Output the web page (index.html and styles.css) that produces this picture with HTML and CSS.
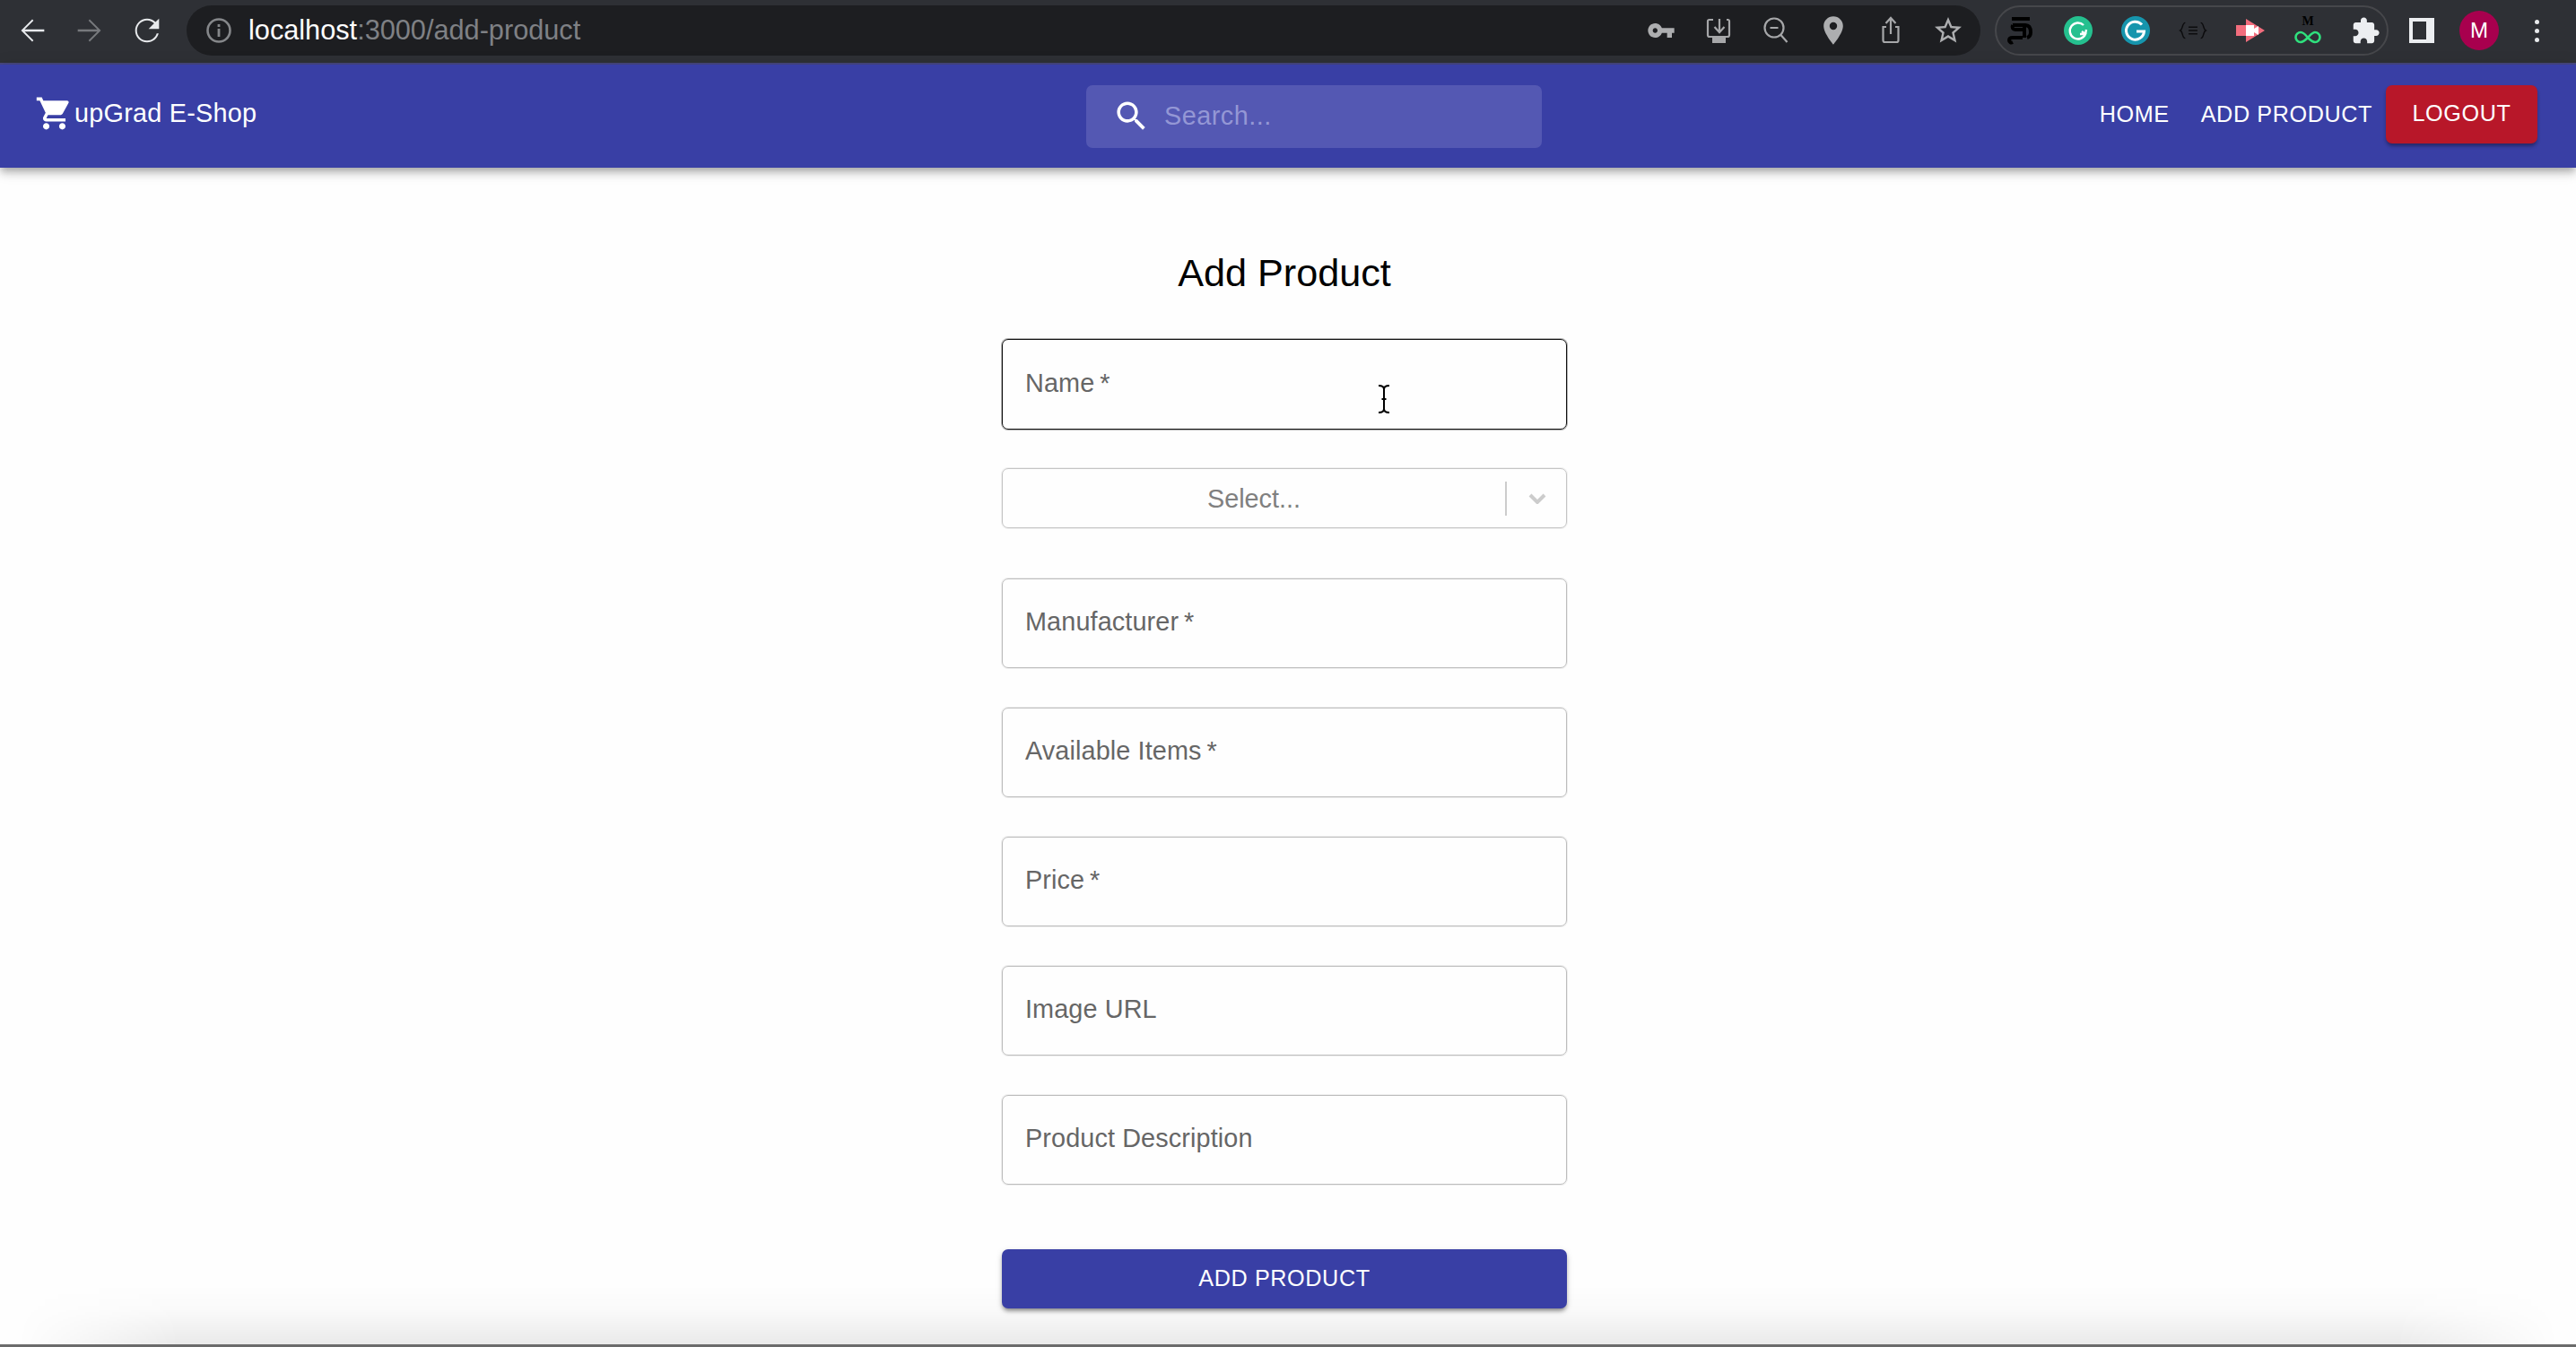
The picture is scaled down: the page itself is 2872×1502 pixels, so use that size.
FILE: index.html
```html
<!DOCTYPE html>
<html lang="en">
<head>
<meta charset="utf-8">
<title>upGrad E-Shop</title>
<link rel="stylesheet" href="styles.css">
</head>
<body>
<div class="app">
  <div class="chrome">
    <div class="slot"><svg class="ic40 light" viewBox="0 0 24 24"><path d="M20 11.3H6.9l5.9-5.9-.8-.9-7.5 7.5 7.5 7.5.8-.9-5.9-5.9H20z"/></svg></div>
    <div class="slot"><svg class="ic40 dim" viewBox="0 0 24 24"><path d="M4 11.3h13.1l-5.9-5.9.8-.9 7.5 7.5-7.5 7.5-.8-.9 5.9-5.9H4z"/></svg></div>
    <div class="slot"><svg class="ic40 light" viewBox="0 0 24 24"><path d="M17.65 6.35C16.2 4.9 14.21 4 12 4c-4.42 0-7.99 3.58-7.99 8s3.57 8 7.99 8c3.73 0 6.84-2.55 7.73-6h-1.3c-.85 2.8-3.35 4.8-6.43 4.8-3.75 0-6.8-3.05-6.8-6.8S8.25 5.2 12 5.2c1.9 0 3.5.8 4.7 2L13 11h7V4l-2.35 2.35z"/></svg></div>
    <div class="omnibox">
      <svg class="info" viewBox="0 0 28 28"><circle cx="14" cy="14" r="12.5"/><rect class="info-i" x="12.6" y="12" width="2.8" height="9"/><rect class="info-i" x="12.6" y="7" width="2.8" height="3"/></svg>
      <div class="url"><span class="url-host">localhost</span><span class="url-rest">:3000/add-product</span></div>
      <div class="omni-actions">
        <div class="slot"><svg class="ic32 grey" viewBox="0 0 24 24"><path d="M12.65 10C11.83 7.67 9.61 6 7 6c-3.31 0-6 2.69-6 6s2.69 6 6 6c2.61 0 4.83-1.67 5.65-4H17v4h4v-4h2v-4H12.65zM7 14c-1.1 0-2-.9-2-2s.9-2 2-2 2 .9 2 2-.9 2-2 2z"/></svg></div>
        <div class="slot"><svg class="ic32 line" viewBox="0 0 32 32"><path d="M10 4H5.500A1.500 1.500 0 0 0 4 5.500V21a2 2 0 0 0 2 2h20a2 2 0 0 0 2-2V5.500A1.500 1.500 0 0 0 26.500 4H25"/><path d="M17 3v14M11.500 12l5.500 6 5.500-6"/><path class="fill" d="M9 24h15v6H9z"/></svg></div>
        <div class="slot"><svg class="ic32 line" viewBox="0 0 32 32"><circle cx="14" cy="13" r="10.500"/><path d="M9.500 13h9M21.500 21l7 8"/></svg></div>
        <div class="slot"><svg class="ic36 grey" viewBox="0 0 24 24"><path d="M12 1.500C8 1.500 4.800 4.700 4.800 8.700c0 5.400 7.200 13.800 7.200 13.800s7.200-8.400 7.200-13.800C19.200 4.700 16 1.500 12 1.500zm0 10a2.800 2.800 0 0 1 0-5.600 2.800 2.800 0 0 1 0 5.600z"/></svg></div>
        <div class="slot"><svg class="ic32 line" viewBox="0 0 32 32"><path d="M11 12H7.500v15a2 2 0 0 0 2 2h13a2 2 0 0 0 2-2V12H21"/><path d="M16 20V2M10.500 8 16 2l5.500 6"/></svg></div>
        <div class="slot"><svg class="ic36 grey" viewBox="0 0 24 24"><path d="M22 9.240l-7.190-.62L12 2 9.190 8.630 2 9.240l5.460 4.730L5.820 21 12 17.270 18.180 21l-1.630-7.030L22 9.240zM12 15.400l-3.760 2.270 1-4.280-3.320-2.880 4.380-.38L12 6.100l1.710 4.040 4.380.38-3.320 2.880 1 4.280L12 15.400z"/></svg></div>
      </div>
    </div>
    <div class="ext-pill">
      <div class="slot first"><svg class="ic32" viewBox="0 0 32 32"><path class="tamil" d="M6 3h20M7 10h14c5 0 6 4 6 8 0 3-1 5-4 6M7 10c-1 3 0 5 3 5h9M20 10v14M18 24H7c-3 0-4 1-4 3s2 3 4 2"/></svg></div>
      <div class="slot"><svg class="ic32" viewBox="0 0 32 32"><circle class="g-green" cx="16" cy="16" r="16"/><path class="g-mark" d="M22 10a9 9 0 1 0 2 10h-6M24 20l-4-3M24 20l1-5"/></svg></div>
      <div class="slot"><svg class="ic32" viewBox="0 0 32 32"><circle class="g-teal" cx="16" cy="16" r="16"/><path class="g-mark thick" d="M23 9.500a10 10 0 1 0 2.500 7.500H17"/></svg></div>
      <div class="slot"><svg class="ic32" viewBox="0 0 26 16"><path class="braces" d="M6 1C3 1 4 7 1.500 8 4 9 3 15 6 15M20 1c3 0 2 6 4.500 7C22 9 23 15 20 15M9 5h8M9 8h8M9 11h8"/></svg></div>
      <div class="slot"><svg class="ic32" viewBox="0 0 32 26"><path class="rec-red" d="M11 0l21 13-21 13V19H0V7h11z"/><path class="rec-white" d="M11 7h9v12h-9zM20 11l5-3v10l-5-3z"/></svg></div>
      <div class="slot"><svg class="ic-tall" viewBox="0 0 32 36"><text class="mem-m" x="16" y="12">M</text><path class="mem-inf" d="M16 26c-3-4-5-6-8-6a5.500 5.500 0 0 0 0 11c3 0 5-2 8-5s5-6 8-6a5.500 5.500 0 0 1 0 11c-3 0-5-2-8-5z"/></svg></div>
      <div class="slot"><svg class="ic33 pale" viewBox="0 0 24 24"><path d="M20.500 11H19V7c0-1.100-.9-2-2-2h-4V3.500C13 2.120 11.880 1 10.500 1S8 2.120 8 3.500V5H4c-1.100 0-1.990.9-1.990 2v3.800H3.500c1.490 0 2.700 1.210 2.700 2.700s-1.210 2.700-2.700 2.700H2V20c0 1.100.9 2 2 2h3.800v-1.500c0-1.490 1.210-2.700 2.700-2.700 1.490 0 2.700 1.210 2.700 2.700V22H17c1.100 0 2-.9 2-2v-4h1.500c1.380 0 2.500-1.120 2.500-2.500S21.880 11 20.500 11z"/></svg></div>
    </div>
    <div class="slot side-slot"><div class="sidebar-icon"></div></div>
    <div class="slot"><div class="avatar">M</div></div>
    <div class="slot"><div class="dots"><i></i><i></i><i></i></div></div>
  </div>

  <header class="navbar">
    <div class="brand">
      <svg class="cart" viewBox="0 0 24 24"><path d="M7 18c-1.100 0-1.990.9-1.990 2S5.900 22 7 22s2-.9 2-2-.9-2-2-2zM1 2v2h2l3.600 7.590-1.350 2.450c-.16.28-.25.61-.25.96 0 1.100.9 2 2 2h12v-2H7.420c-.14 0-.25-.11-.25-.25l.03-.12.9-1.630h7.450c.75 0 1.410-.41 1.750-1.030l3.580-6.490c.08-.14.120-.31.120-.48 0-.55-.45-1-1-1H5.210l-.94-2H1zm16 16c-1.100 0-1.990.9-1.990 2s.89 2 1.990 2 2-.9 2-2-.9-2-2-2z"/></svg>
      <span class="brand-name">upGrad E-Shop</span>
    </div>
    <div class="search">
      <svg class="search-icon" viewBox="0 0 24 24"><path d="M15.500 14h-.79l-.28-.27C15.410 12.590 16 11.110 16 9.500 16 5.910 13.090 3 9.500 3S3 5.910 3 9.500 5.910 16 9.500 16c1.610 0 3.090-.59 4.230-1.570l.27.28v.79l5 4.990L20.490 19l-4.990-5zm-6 0C7.010 14 5 11.990 5 9.500S7.010 5 9.500 5 14 7.010 14 9.500 11.990 14 9.500 14z"/></svg>
      <span class="search-text">Search...</span>
    </div>
    <nav class="nav-links">
      <a class="nav-link home">HOME</a>
      <a class="nav-link add">ADD PRODUCT</a>
      <a class="logout">LOGOUT</a>
    </nav>
  </header>

  <main class="main">
    <h1 class="title">Add Product</h1>
    <form class="form">
      <div class="field focused"><span class="label">Name&thinsp;*</span>
        <svg class="ibeam" viewBox="0 0 14 32"><path d="M1 1c4 0 6 1 6 4v22c0 3-2 4-6 4M13 1c-4 0-6 1-6 4v22c0 3 2 4 6 4M4.500 16h5"/></svg>
      </div>
      <div class="select">
        <span class="select-value">Select...</span>
        <span class="select-sep"></span>
        <svg class="chevron" viewBox="0 0 20 12"><path d="M2 2l8 8 8-8"/></svg>
      </div>
      <div class="field"><span class="label">Manufacturer&thinsp;*</span></div>
      <div class="field"><span class="label">Available Items&thinsp;*</span></div>
      <div class="field"><span class="label">Price&thinsp;*</span></div>
      <div class="field"><span class="label">Image URL</span></div>
      <div class="field"><span class="label">Product Description</span></div>
      <button class="submit" type="button">ADD PRODUCT</button>
    </form>
  </main>
  <div class="window-edge"></div>
</div>
</body>
</html>
```
FILE: styles.css
```css
* { box-sizing: border-box; }
html, body { margin: 0; padding: 0; height: 100%; }
body { font-family: "Liberation Sans", Arial, sans-serif; background: #fefefe; overflow: hidden; }
.app { position: relative; display: flex; flex-direction: column; width: 2872px; height: 1502px; overflow: hidden; }

/* browser chrome */
.chrome { flex: none; display: flex; align-items: center; height: 72px; padding: 0 0 2px 4px; background: #2e3035; border-bottom: 2px solid #47477f; }
.slot { flex: none; display: flex; align-items: center; justify-content: center; width: 64px; height: 56px; }
.slot.first { margin-left: -5px; }
.slot.side-slot { margin-left: 5px; }
.slot svg { display: block; }
.ic40 { width: 40px; height: 40px; }
.ic36 { width: 36px; height: 36px; }
.ic33 { width: 33px; height: 33px; }
.ic32 { width: 32px; height: 32px; }
.ic-tall { width: 32px; height: 36px; }
.light path { fill: #e8eaed; }
.dim path { fill: #77797d; }
.grey path { fill: #adaeb0; }
.pale path { fill: #eceef1; }
.line path, .line circle { fill: none; stroke: #a6a7a9; stroke-width: 2.2; }
.line .fill { fill: #a6a7a9; stroke: none; }

.omnibox { flex: none; display: flex; align-items: center; width: 2000px; height: 56px; margin-left: 12px; padding: 0 4px 0 22px; background: #1d1e21; border-radius: 28px; }
.info { width: 28px; height: 28px; flex: none; }
.info circle { fill: none; stroke: #85878a; stroke-width: 2.6; }
.info-i { fill: #85878a; }
.url { flex: 1; margin-left: 19px; font-size: 30.7px; white-space: nowrap; }
.url-host { color: #ffffff; }
.url-rest { color: #7f8185; }
.omni-actions { display: flex; flex: none; }

.ext-pill { flex: none; display: flex; align-items: center; width: 439px; height: 56px; margin-left: 16px; border: 2px solid #46474b; border-radius: 28px; }
.tamil { fill: none; stroke: #000; stroke-width: 4; }
.g-green { fill: #25c08f; }
.g-teal { fill: #1695ad; }
.g-mark { fill: none; stroke: #fff; stroke-width: 2.4; }
.g-mark.thick { stroke-width: 3; }
.braces { fill: none; stroke: #0c0c0e; stroke-width: 1.2; }
.rec-red { fill: #f26d7d; }
.rec-white { fill: #fff; }
.mem-m { font-family: "Liberation Serif", serif; font-weight: 700; font-size: 14px; text-anchor: middle; fill: #000; }
.mem-inf { fill: none; stroke: #2fe07d; stroke-width: 2.6; }
.sidebar-icon { width: 28px; height: 28px; border: 4px solid #eceef1; border-right-width: 9px; }
.avatar { display: flex; align-items: center; justify-content: center; width: 44px; height: 44px; border-radius: 50%; background: #a8004e; color: #fff; font-size: 24px; }
.dots { display: flex; flex-direction: column; gap: 5px; }
.dots i { display: block; width: 5px; height: 5px; border-radius: 50%; background: #e8eaed; }

/* app bar */
.navbar { position: relative; z-index: 2; flex: none; display: grid; grid-template-columns: 1173px 508px 1fr; align-items: center; height: 115px; padding: 0 43px 0 38px; background: #393fa5; box-shadow: 0 4px 7px -2px rgba(0,0,0,.2), 0 7px 9px rgba(0,0,0,.14), 0 2px 18px rgba(0,0,0,.12); }
.brand { display: flex; align-items: center; color: #fff; margin-top: -7px; }
.cart { width: 43px; height: 43px; fill: #fff; margin-left: 1px; }
.brand-name { font-size: 28.8px; margin-left: 1px; letter-spacing: .25px; }
.search { display: flex; align-items: center; height: 70px; background: #5458b3; border-radius: 7px; }
.search-icon { width: 43px; height: 43px; margin-left: 29px; fill: #fff; flex: none; }
.search-text { margin-left: 15px; font-size: 28.8px; color: #9497d5; letter-spacing: .5px; }
.nav-links { display: flex; align-items: center; justify-content: flex-end; font-size: 25.2px; letter-spacing: .6px; color: #fff; margin-top: -5px; }
.nav-link { display: block; }
.nav-link.add { margin-left: 35px; margin-right: 15px; }
.logout { display: flex; align-items: center; justify-content: center; width: 169px; height: 65px; padding-bottom: 2px; border-radius: 7px; background: #b81729; box-shadow: 0 4px 4px -2px rgba(0,0,0,.25), 0 3px 4px rgba(0,0,0,.2); }

/* page */
.main { position: relative; z-index: 1; flex: 1; display: flex; flex-direction: column; align-items: center; padding: 92px 8px 0 0; }
.title { margin: 0; font-size: 43.2px; font-weight: 400; line-height: 50px; color: #000; }
.form { display: flex; flex-direction: column; gap: 44px; width: 630px; margin-top: 49px; }
.field { position: relative; display: flex; align-items: center; height: 100px; padding: 0 0 3px 25px; border: 1px solid #bdbdbd; border-radius: 7px; box-shadow: 0 0 0 1px rgba(190,190,190,.25); }
.field.focused { height: 101px; margin-bottom: -1px; border-color: #111; box-shadow: 0 0 0 1px rgba(0,0,0,.3); }
.label { font-size: 28.8px; color: #666; letter-spacing: .12px; }
.ibeam { position: absolute; left: 418px; top: 50px; width: 14px; height: 32px; fill: none; stroke: #000; stroke-width: 2; }
.select { display: flex; align-items: center; height: 67px; margin-bottom: 12px; padding-top: 1px; border: 1px solid #c4c4c4; border-radius: 7px; box-shadow: 0 0 0 1px rgba(200,200,200,.25); }
.select-value { flex: 1; text-align: center; font-size: 28.8px; color: #808080; }
.select-sep { flex: none; width: 2px; height: 38px; background: #ccc; }
.chevron { flex: none; width: 20px; height: 12px; margin: 0 22px 0 24px; fill: none; stroke: #ccc; stroke-width: 4; }
.submit { height: 66px; margin-top: 28px; border: 0; border-radius: 7px; padding: 0 0 2px; background: #393fa5; color: #fff; font-family: inherit; font-size: 25.2px; letter-spacing: .6px; box-shadow: 0 4px 4px -2px rgba(0,0,0,.3), 0 3px 5px rgba(0,0,0,.18), 0 2px 9px rgba(0,0,0,.1); }

/* bottom edge of the window */
.window-edge { position: absolute; left: 0; right: 0; bottom: 0; height: 3px; background: #6b6b6b; }
.window-edge::before { content: ""; position: absolute; left: 20px; right: 20px; bottom: 3px; height: 66px; background: linear-gradient(to top, rgba(0,0,0,.08), rgba(0,0,0,.015) 60%, transparent); -webkit-mask-image: linear-gradient(to right, transparent, #000 180px, #000 calc(100% - 180px), transparent); mask-image: linear-gradient(to right, transparent, #000 180px, #000 calc(100% - 180px), transparent); }
```
